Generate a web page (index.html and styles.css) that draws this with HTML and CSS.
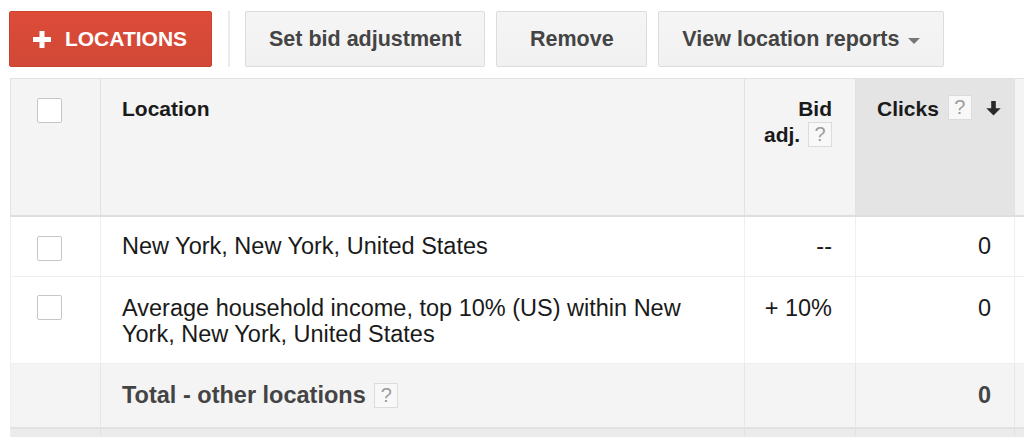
FILE: index.html
```html
<!DOCTYPE html>
<html>
<head>
<meta charset="utf-8">
<link rel="stylesheet" href="styles.css">
</head>
<body>
<div class="toolbar">
  <button class="btn btn-red"><svg class="plus" width="18" height="17" viewBox="0 0 18 17"><path d="M6.5 0h5v6h6.5v5h-6.5v6h-5v-6H0V6h6.5z" fill="#fff"/></svg>LOCATIONS</button>
  <span class="divider"></span>
  <button class="btn">Set bid adjustment</button>
  <button class="btn btn-remove">Remove</button>
  <button class="btn">View location reports<span class="caret"></span></button>
</div>
<table class="grid">
  <colgroup>
    <col class="c1"><col class="c2"><col class="c3"><col class="c4"><col class="c5">
  </colgroup>
  <thead>
    <tr class="head">
      <th class="cb"><span class="box"></span></th>
      <th class="loc">Location</th>
      <th class="num">Bid<br><span class="nowrap">adj. <span class="help">?</span></span></th>
      <th class="sorted"><div class="clicks">Clicks <span class="help">?</span><svg class="arrow" width="15" height="15" viewBox="0 0 15 15"><path d="M5.2 0h4.6v7.2h4.9L7.5 14.6 0.3 7.2h4.9z" fill="#2a2a2a"/></svg></div></th>
      <th></th>
    </tr>
  </thead>
  <tbody>
    <tr class="r1">
      <td class="cb"><span class="box"></span></td>
      <td>New York, New York, United States</td>
      <td class="num">--</td>
      <td class="num">0</td>
      <td></td>
    </tr>
    <tr class="r2">
      <td class="cb"><span class="box"></span></td>
      <td>Average household income, top 10% (US) within New York, New York, United States</td>
      <td class="num">+ 10%</td>
      <td class="num">0</td>
      <td></td>
    </tr>
    <tr class="total">
      <td class="cb"></td>
      <td>Total - other locations <span class="help">?</span></td>
      <td class="num"></td>
      <td class="num">0</td>
      <td></td>
    </tr>
    <tr class="foot">
      <td></td><td></td><td></td><td></td><td></td>
    </tr>
  </tbody>
</table>
</body>
</html>
```
FILE: styles.css
```css
html, body {
  margin: 0;
  padding: 0;
  background: #fff;
  overflow: hidden;
}
body {
  font-family: "Liberation Sans", Arial, sans-serif;
  width: 1024px;
  height: 437px;
}
.toolbar {
  display: flex;
  align-items: stretch;
  height: 56px;
  padding: 11px 0 0 9px;
}
.btn {
  font-family: "Liberation Sans", Arial, sans-serif;
  font-weight: bold;
  font-size: 21.5px;
  color: #444;
  background: linear-gradient(#f5f5f5, #f1f1f1);
  border: 1px solid #dcdcdc;
  border-radius: 2px;
  padding: 0 23px;
  margin: 0 11px 0 0;
  height: 56px;
  display: flex;
  align-items: center;
  justify-content: center;
  cursor: default;
}
.btn-red {
  color: #fff;
  background: linear-gradient(#dd4b39, #d14836);
  border-color: #c9412f;
  padding: 0 24px 0 23px;
  font-size: 21px;
  margin-right: 0;
  width: 203px;
}
.plus {
  margin-right: 14px;
  flex: none;
}
.divider {
  width: 2px;
  background: #ebebeb;
  margin: 0 15px 0 16px;
  height: 56px;
}
.btn-remove {
  width: 151px;
  padding: 0;
}
.caret {
  display: inline-block;
  width: 0;
  height: 0;
  border-left: 6.5px solid transparent;
  border-right: 6.5px solid transparent;
  border-top: 6.5px solid #777;
  margin-left: 9px;
  margin-top: 3px;
}
.grid {
  margin: 11px 0 0 10px;
  border-collapse: collapse;
  table-layout: fixed;
  width: 1214px;
  font-size: 23.5px;
  line-height: 26px;
  color: #1a1a1a;
}
.c1 { width: 90px; }
.c2 { width: 644px; }
.c3 { width: 111px; }
.c4 { width: 159px; }
.c5 { width: 210px; }
.grid th, .grid td {
  vertical-align: top;
  text-align: left;
  padding: 16px 23px 0 21px;
  border: 1px solid #efefef;
}
.grid th {
  background: #f4f4f4;
  font-size: 21px;
  font-weight: bold;
  border-color: #e2e2e2;
  border-bottom: 2px solid #dedede;
  color: #1a1a1a;
  padding-top: 17px;
}
.grid thead tr { border-top: 1px solid #e2e2e2; }
.grid th.sorted {
  background: #e4e4e4;
  padding-left: 21px;
  padding-right: 12px;
}
.nowrap { white-space: nowrap; }
.head { height: 137px; }
.r1 { height: 61px; }
.r2 { height: 87px; }
.r2 td { padding-top: 18px; }
.total { height: 64px; }
.grid .num {
  text-align: right;
  white-space: nowrap;
  padding-left: 0;
}
.grid .cb {
  text-align: left;
  padding: 19px 0 0 26px;
}
.grid th.cb { padding-top: 19px; }
.r2 .cb { padding-top: 18px; }
.box {
  display: inline-block;
  width: 23px;
  height: 23px;
  border: 1px solid #c6c6c6;
  border-radius: 2px;
  background: #fff;
  vertical-align: top;
}
.grid tbody td { border-left-color: #efefef; }
.r1 td, .r2 td { background: #fff; }
.total td {
  background: #f4f4f4;
  font-weight: bold;
  color: #444;
  padding-top: 18px;
  border-color: #e6e6e6;
  border-bottom: 2px solid #e2e2e2;
}
.foot { height: 20px; }
.foot td {
  background: #ebebeb;
  border-color: #e2e2e2;
  padding: 0;
}
.help {
  display: inline-block;
  box-sizing: border-box;
  width: 24px;
  height: 25px;
  border: 1px solid #dcdcdc;
  background: #f8f8f8;
  color: #9c9c9c;
  font-size: 20px;
  line-height: 23px;
  text-align: center;
  font-weight: normal;
  vertical-align: 1px;
  margin-left: 2px;
}
.clicks {
  display: flex;
  align-items: flex-start;
  white-space: nowrap;
}
.clicks .help {
  margin-left: 9px;
  margin-top: -1px;
}
.arrow {
  margin-left: 14px;
  margin-top: 5px;
}
```
